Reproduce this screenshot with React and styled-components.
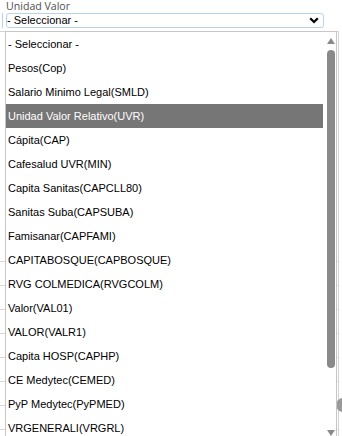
import React from 'react';
import styled, { createGlobalStyle } from 'styled-components';

const OPTIONS = [
    '- Seleccionar -',
    'Pesos(Cop)',
    'Salario Minimo Legal(SMLD)',
    'Unidad Valor Relativo(UVR)',
    'Cápita(CAP)',
    'Cafesalud UVR(MIN)',
    'Capita Sanitas(CAPCLL80)',
    'Sanitas Suba(CAPSUBA)',
    'Famisanar(CAPFAMI)',
    'CAPITABOSQUE(CAPBOSQUE)',
    'RVG COLMEDICA(RVGCOLM)',
    'Valor(VAL01)',
    'VALOR(VALR1)',
    'Capita HOSP(CAPHP)',
    'CE Medytec(CEMED)',
    'PyP Medytec(PyPMED)',
    'VRGENERALI(VRGRL)',
];

const SELECTED = 3;

const App = () => {
    return (
        <>
            <GlobalStyle />
            <Page>
                <Label>Unidad Valor</Label>
                <SelectRow>
                    <PrevInput />
                    <SelectBox>
                        <SelectText>- Seleccionar -</SelectText>
                        <svg width="10" height="7" viewBox="0 0 10 7">
                            <path d="M1.2 1.2 L5 5 L8.8 1.2" fill="none" stroke="#000" strokeWidth="2.2" />
                        </svg>
                    </SelectBox>
                </SelectRow>
                <Behind>
                    <BehindTable>
                        {Array.from({ length: 13 }).map((_, i) => (
                            <BehindRow key={i} />
                        ))}
                    </BehindTable>
                    <BehindKnob />
                </Behind>

                <Dropdown>
                    <List>
                        {OPTIONS.map((opt, i) => (
                            <Option key={opt} $selected={i === SELECTED}>{opt}</Option>
                        ))}
                    </List>
                    <Scrollbar>
                        <svg width="8" height="6" viewBox="0 0 8 6">
                            <path d="M0 6 L4 0 L8 6 Z" fill="#8a8a8a" />
                        </svg>
                        <Thumb />
                        <svg width="8" height="6" viewBox="0 0 8 6">
                            <path d="M0 0 L8 0 L4 6 Z" fill="#8a8a8a" />
                        </svg>
                    </Scrollbar>
                </Dropdown>
            </Page>
        </>
    );
};

const GlobalStyle = createGlobalStyle`
    body {
        margin: 0;
        background: #ffffff;
        font-family: "Liberation Sans", Arial, sans-serif;
    }
`;

const Page = styled.div`
    position: relative;
    width: 342px;
    height: 436px;
    overflow: hidden;
    background: #ffffff;
`;

const Label = styled.div`
    padding: 0 0 0 6px;
    height: 13px;
    line-height: 12px;
    font-family: "Open Sans", sans-serif;
    font-size: 10.6px;
    color: #4f4f4f;
`;

const SelectRow = styled.div`
    display: flex;
    align-items: stretch;
    gap: 3px;
`;

const PrevInput = styled.div`
    width: 2px;
    height: 15px;
    border-right: 1px solid #b9d3e6;
`;

const SelectBox = styled.div`
    box-sizing: border-box;
    width: 318px;
    height: 15px;
    border: 1px solid #b9d3e6;
    border-radius: 3px;
    display: flex;
    align-items: center;
    justify-content: space-between;
    padding: 0 4px 0 0;

    svg {
        display: block;
    }
`;

const SelectText = styled.span`
    font-size: 11px;
    line-height: 13px;
    color: #000000;
`;

const Behind = styled.div`
    position: relative;
    margin-top: 3px;
    height: 405px;
    border-top: 1px solid #d4d4d4;
    border-right: 1px solid #d4d4d4;
    width: 338px;
`;

const BehindTable = styled.div`
    padding-top: 206px;
    display: flex;
    flex-direction: column;
`;

const BehindRow = styled.div`
    height: 23px;
    border-bottom: 1px solid #d8d8d8;
`;

const BehindKnob = styled.div`
    position: absolute;
    right: -6px;
    top: 366px;
    width: 8px;
    height: 14px;
    border-radius: 7px 0 0 7px;
    background: #9a9a9a;
`;

const Dropdown = styled.div`
    position: absolute;
    top: 31px;
    left: 5px;
    width: 332px;
    height: 420px;
    box-sizing: border-box;
    border: 1px solid #c6c6c6;
    background: #ffffff;
    display: flex;
`;

const List = styled.div`
    width: 317px;
    display: flex;
    flex-direction: column;
`;

const Option = styled.div`
    height: 24px;
    line-height: 24px;
    padding-left: 2px;
    font-size: 11px;
    white-space: nowrap;
    color: ${p => (p.$selected ? '#ffffff' : '#000000')};
    background: ${p => (p.$selected ? '#767676' : 'transparent')};
`;

const Scrollbar = styled.div`
    width: 13px;
    display: flex;
    flex-direction: column;
    align-items: center;
    padding-top: 6px;

    svg {
        display: block;
        margin-left: 2px;
    }

    svg:last-child {
        margin-top: 62px;
    }
`;

const Thumb = styled.div`
    width: 8px;
    height: 318px;
    margin: 6px 0 0 2px;
    border-radius: 4px;
    background: #8a8a8a;
`;

export default App;
